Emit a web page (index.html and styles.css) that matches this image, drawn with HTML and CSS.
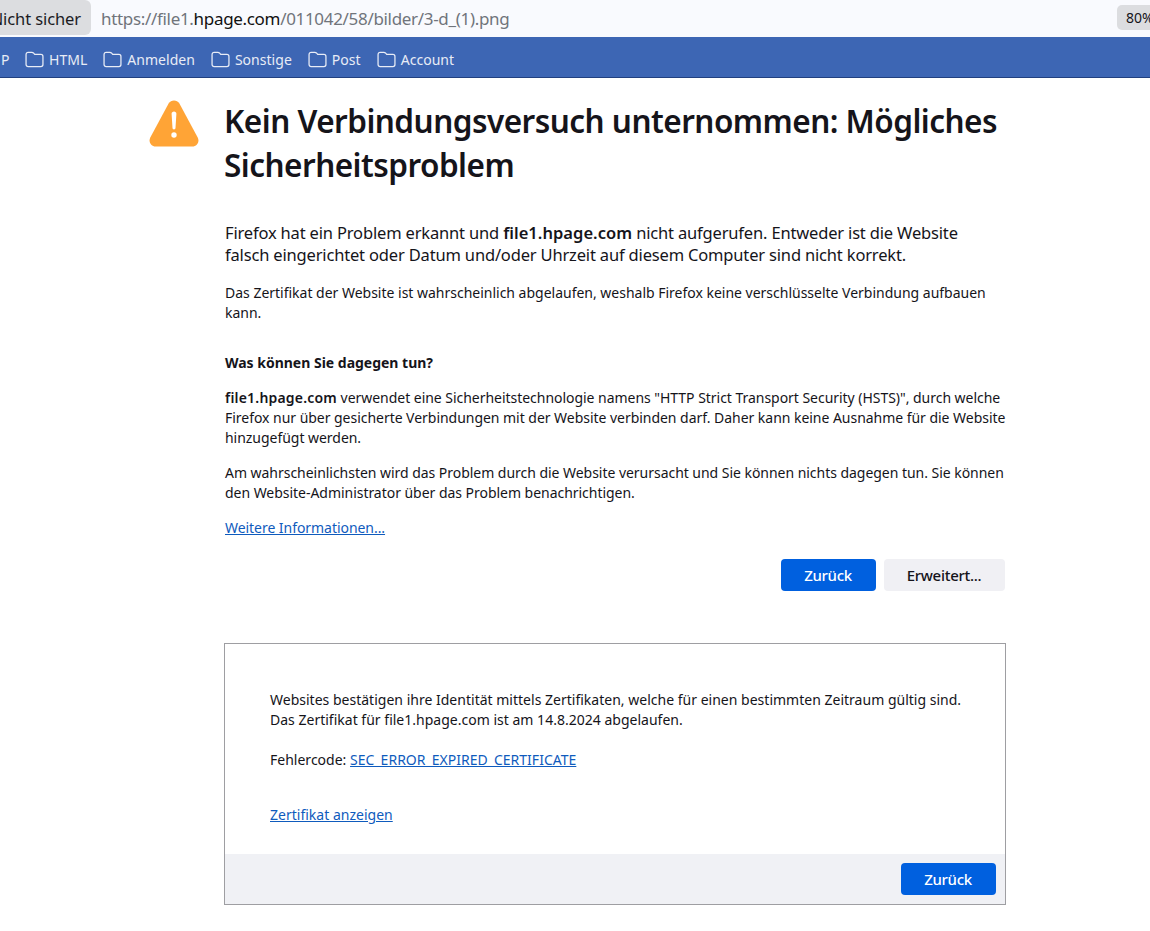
FILE: index.html
```html
<!DOCTYPE html>
<html lang="de">
<head>
<meta charset="utf-8">
<title>Kein Verbindungsversuch unternommen</title>
<link rel="stylesheet" href="styles.css">
</head>
<body>
<header class="urlbar">
  <div class="chip">Nicht sicher</div>
  <div class="url">https://file1.<b>hpage.com</b>/011042/58/bilder/3-d_(1).png</div>
  <div class="zoom">80%</div>
</header>
<nav class="bookmarks">
  <span class="mark first">P</span>
  <span class="mark"><svg class="folder" viewBox="0 0 18 16"><path d="M1 3.2C1 2 1.8 1.2 3 1.2h3.6c.6 0 1 .2 1.4.6l1.2 1.4h5.800c1.200 0 2 .8 2 2v7.600c0 1.200-.8 2-2 2H3c-1.200 0-2-.8-2-2z"/></svg>HTML</span>
  <span class="mark"><svg class="folder" viewBox="0 0 18 16"><path d="M1 3.2C1 2 1.8 1.2 3 1.2h3.6c.6 0 1 .2 1.4.6l1.2 1.4h5.800c1.200 0 2 .8 2 2v7.600c0 1.200-.8 2-2 2H3c-1.200 0-2-.8-2-2z"/></svg>Anmelden</span>
  <span class="mark"><svg class="folder" viewBox="0 0 18 16"><path d="M1 3.2C1 2 1.8 1.2 3 1.2h3.6c.6 0 1 .2 1.4.6l1.2 1.4h5.800c1.200 0 2 .8 2 2v7.600c0 1.200-.8 2-2 2H3c-1.200 0-2-.8-2-2z"/></svg>Sonstige</span>
  <span class="mark"><svg class="folder" viewBox="0 0 18 16"><path d="M1 3.2C1 2 1.8 1.2 3 1.2h3.6c.6 0 1 .2 1.4.6l1.2 1.4h5.800c1.200 0 2 .8 2 2v7.600c0 1.200-.8 2-2 2H3c-1.200 0-2-.8-2-2z"/></svg>Post</span>
  <span class="mark"><svg class="folder" viewBox="0 0 18 16"><path d="M1 3.2C1 2 1.8 1.2 3 1.2h3.6c.6 0 1 .2 1.4.6l1.2 1.4h5.800c1.200 0 2 .8 2 2v7.600c0 1.200-.8 2-2 2H3c-1.200 0-2-.8-2-2z"/></svg>Account</span>
</nav>
<main class="page">
  <svg class="warn" viewBox="0 0 50 48"><path class="tri" d="M19.600 3.600c2.400-4.300 8.400-4.300 10.800 0l18.300 33.900c2.200 4.100-.7 9-5.400 9H6.700c-4.700 0-7.600-4.900-5.400-9z"/><path class="ex" d="M25 11.500c1.400 0 2.400 1 2.400 2.200l-.9 14.300c0 .8-.7 1.400-1.500 1.400s-1.500-.6-1.500-1.400l-.9-14.300c0-1.200 1-2.200 2.400-2.200z"/><circle class="ex" cx="25" cy="35" r="2.700"/></svg>
  <div class="content">
    <h1>Kein Verbindungsversuch unternommen: Mögliches<br>Sicherheitsproblem</h1>
    <p class="intro">Firefox hat ein Problem erkannt und <b>file1.hpage.com</b> nicht aufgerufen. Entweder ist die Website<br>falsch eingerichtet oder Datum und/oder Uhrzeit auf diesem Computer sind nicht korrekt.</p>
    <p class="what">Das Zertifikat der Website ist wahrscheinlich abgelaufen, weshalb Firefox keine verschlüsselte Verbindung aufbauen<br>kann.</p>
    <h2>Was können Sie dagegen tun?</h2>
    <p class="para"><b>file1.hpage.com</b> verwendet eine Sicherheitstechnologie namens "HTTP Strict Transport Security (HSTS)", durch welche<br>Firefox nur über gesicherte Verbindungen mit der Website verbinden darf. Daher kann keine Ausnahme für die Website<br>hinzugefügt werden.</p>
    <p class="para">Am wahrscheinlichsten wird das Problem durch die Website verursacht und Sie können nichts dagegen tun. Sie können<br>den Website-Administrator über das Problem benachrichtigen.</p>
    <a class="link more" href="#">Weitere Informationen...</a>
    <div class="actions">
      <button class="btn primary">Zurück</button>
      <button class="btn secondary">Erweitert...</button>
    </div>
    <section class="advanced">
      <div class="adv-body">
        <p class="adv-text">Websites bestätigen ihre Identität mittels Zertifikaten, welche für einen bestimmten Zeitraum gültig sind.<br>Das Zertifikat für file1.hpage.com ist am 14.8.2024 abgelaufen.</p>
        <p class="adv-code">Fehlercode: <a class="link" href="#">SEC_ERROR_EXPIRED_CERTIFICATE</a></p>
        <p class="adv-cert"><a class="link" href="#">Zertifikat anzeigen</a></p>
      </div>
      <footer class="adv-foot"><button class="btn primary">Zurück</button></footer>
    </section>
  </div>
</main>
</body>
</html>
```
FILE: styles.css
```css
html, body { margin: 0; padding: 0; }
body {
  width: 1150px;
  height: 931px;
  overflow: hidden;
  background: #fff;
  color: #15141a;
  font-family: "Noto Sans", "Liberation Sans", sans-serif;
  font-size: 14px;
  letter-spacing: -0.01px;
}
.urlbar {
  height: 37px;
  background: #f9fafe;
  display: flex;
  align-items: flex-start;
  position: relative;
  overflow: hidden;
}
.chip {
  width: 91px;
  height: 35px;
  background: #dcdde0;
  border-radius: 0 6px 6px 0;
  box-sizing: border-box;
  display: flex;
  align-items: center;
  justify-content: flex-end;
  padding: 2px 10px 0 0;
  font-size: 16.5px;
  letter-spacing: -0.1px;
  white-space: nowrap;
  overflow: hidden;
  color: #1b1b1f;
}
.url {
  margin-left: 10px;
  height: 37px;
  line-height: 38px;
  font-size: 17px;
  letter-spacing: -0.32px;
  color: #70747b;
  white-space: nowrap;
}
.url b { font-weight: 400; color: #111; }
.zoom {
  position: absolute;
  left: 1117px;
  top: 5px;
  width: 45px;
  height: 25px;
  line-height: 25px;
  padding-left: 9px;
  box-sizing: border-box;
  background: #dcdde0;
  border-radius: 5px;
  font-size: 14px;
}
.bookmarks {
  height: 41px;
  box-sizing: border-box;
  padding-top: 5px;
  background: #3d66b4;
  border-bottom: 1px solid #21407f;
  display: flex;
  align-items: center;
  color: #e8ecf6;
  font-size: 14px;
  letter-spacing: 0.03px;
  white-space: nowrap;
}
.mark { display: flex; align-items: center; margin-right: 16px; }
.mark.first { margin-left: 1px; margin-right: 15px; width: 9px; }
.folder {
  width: 19px;
  height: 17px;
  margin-right: 5px;
  fill: none;
  stroke: #e8ecf6;
  stroke-width: 1.2;
}
.page {
  display: flex;
  padding-left: 149px;
}
.warn { width: 50px; height: 48px; margin-top: 22px; margin-right: 26px; flex: none; }
.tri { fill: #ffa436; }
.ex { fill: #fff; }
.content { width: 780px; padding-top: 21px; }
h1 {
  margin: 0 0 0 -1px;
  font-size: 31.5px;
  line-height: 44px;
  font-weight: 600;
  letter-spacing: -0.52px;
  white-space: nowrap;
  color: #15141a;
}
.intro { margin: 35px 0 0; font-size: 16.5px; line-height: 22px; letter-spacing: -0.17px; }
.intro b { font-weight: 600; letter-spacing: 0.03px; }
.what { margin: 17px 0 0; line-height: 20px; }
h2 { margin: 30px 0 0; font-size: 14px; line-height: 20px; font-weight: 700; }
.para { margin: 15px 0 0; line-height: 20px; letter-spacing: -0.035px; white-space: nowrap; }
.para b { font-weight: 600; letter-spacing: 0.2px; }
.link { color: #0f5bbd; text-decoration: underline; }
.more { display: block; margin-top: 15px; line-height: 20px; letter-spacing: -0.05px; }
.actions { display: flex; justify-content: flex-end; gap: 8px; margin-top: 21px; }
.btn {
  height: 32px;
  border: 0;
  border-radius: 4px;
  font-family: inherit;
  font-size: 15px;
  font-weight: 500;
  letter-spacing: -0.3px;
  padding: 0 1px 0 0;
}
.primary { width: 95px; background: #0060df; color: #fff; }
.secondary { width: 121px; background: #f0f0f4; color: #15141a; }
.advanced {
  margin: 52px 0 0 -1px;
  width: 782px;
  height: 262px;
  box-sizing: border-box;
  border: 1px solid #9e9ea2;
  display: flex;
  flex-direction: column;
}
.adv-body { flex: 1; padding: 46px 45px 0; letter-spacing: 0.01px; white-space: nowrap; }
.adv-body p { margin: 0; line-height: 20px; }
.adv-body .adv-code { margin-top: 20px; }
.adv-body .adv-cert { margin-top: 35px; }
.adv-foot {
  height: 50px;
  background: #f0f1f5;
  display: flex;
  justify-content: flex-end;
  align-items: flex-start;
  padding: 9px 9px 0 0;
  box-sizing: border-box;
}
```
